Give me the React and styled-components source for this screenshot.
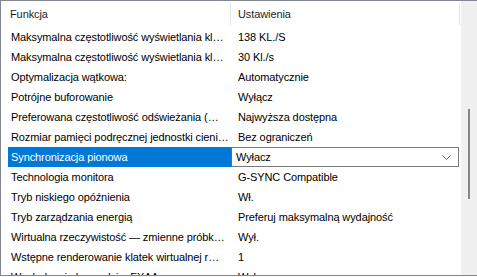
import styled, { createGlobalStyle } from 'styled-components';

const GlobalStyle = createGlobalStyle`
  html, body {
    margin: 0;
    padding: 0;
    background: #ffffff;
    overflow: hidden;
  }
`;

const rows = [
  { name: 'Maksymalna częstotliwość wyświetlania kl…', value: '138 KL./S' },
  { name: 'Maksymalna częstotliwość wyświetlania kl…', value: '30 Kl./s' },
  { name: 'Optymalizacja wątkowa:', value: 'Automatycznie' },
  { name: 'Potrójne buforowanie', value: 'Wyłącz' },
  { name: 'Preferowana częstotliwość odświeżania (…', value: 'Najwyższa dostępna' },
  { name: 'Rozmiar pamięci podręcznej jednostki cieni…', value: 'Bez ograniczeń' },
  { name: 'Synchronizacja pionowa', value: 'Wyłacz', selected: true },
  { name: 'Technologia monitora', value: 'G-SYNC Compatible' },
  { name: 'Tryb niskiego opóźnienia', value: 'Wł.' },
  { name: 'Tryb zarządzania energią', value: 'Preferuj maksymalną wydajność' },
  { name: 'Wirtualna rzeczywistość — zmienne próbk…', value: 'Wył.' },
  { name: 'Wstępne renderowanie klatek wirtualnej r…', value: '1' },
  { name: 'Wygładzanie krawędzi – FXAA', value: 'Wył.' },
];

const Chevron = () => (
  <svg width="9" height="5" viewBox="0 0 9 5">
    <path d="M0.5 0.5 L4.5 4.5 L8.5 0.5" fill="none" stroke="#606060" strokeWidth="1" />
  </svg>
);

const App = () => (
  <>
    <GlobalStyle />
    <StyledPanel>
      <StyledList>
        <StyledHeader>
          <StyledHeadCell $width="230px" $pad="9px">Funkcja</StyledHeadCell>
          <StyledHeadCell $width="229px" $pad="7px">Ustawienia</StyledHeadCell>
        </StyledHeader>
        {rows.map((row, i) => (
          <StyledRow key={i}>
            <StyledName $selected={row.selected}>{row.name}</StyledName>
            {row.selected ? (
              <StyledSelect>
                <span>{row.value}</span>
                <Chevron />
              </StyledSelect>
            ) : (
              <StyledValue>{row.value}</StyledValue>
            )}
          </StyledRow>
        ))}
      </StyledList>
      <StyledScrollbar>
        <StyledThumb />
      </StyledScrollbar>
    </StyledPanel>
  </>
);

const StyledPanel = styled.div`
  display: flex;
  box-sizing: border-box;
  width: 478px;
  height: 276px;
  border: 1px solid #828790;
  overflow: hidden;
  background: #ffffff;

  font-family: 'Liberation Sans', Arial, sans-serif;
  font-size: 11px;
  letter-spacing: -0.1px;
  color: #000000;
`;

const StyledList = styled.div`
  width: 460px;
  flex-shrink: 0;
  overflow: hidden;
`;

const StyledHeader = styled.div`
  display: flex;
  height: 26px;
  align-items: center;
`;

const StyledHeadCell = styled.div`
  box-sizing: border-box;
  width: ${({ $width }) => $width};
  height: 22px;
  line-height: 22px;
  padding-left: ${({ $pad }) => $pad};
  border-right: 1px solid #e5e5e5;
  color: #1e1e1e;
`;

const StyledRow = styled.div`
  display: grid;
  grid-template-columns: 230px 230px;
  height: 20px;
  line-height: 20px;
`;

const StyledName = styled.div`
  margin-left: 7px;
  padding-left: 3px;
  white-space: nowrap;
  overflow: hidden;
  text-overflow: ellipsis;
  background: ${({ $selected }) => ($selected ? '#0078d7' : 'transparent')};
  color: ${({ $selected }) => ($selected ? '#ffffff' : '#000000')};
`;

const StyledValue = styled.div`
  padding-left: 7px;
  white-space: nowrap;
  overflow: hidden;
`;

const StyledSelect = styled.div`
  display: flex;
  align-items: center;
  justify-content: space-between;
  box-sizing: border-box;
  width: 228px;
  height: 20px;
  padding: 0 7px 0 4px;
  border: 1px solid #7a7a7a;
  border-left-color: #2f78c4;
  line-height: 18px;
`;

const StyledScrollbar = styled.div`
  position: relative;
  width: 16px;
  flex-shrink: 0;
  background: #f0f0f0;
`;

const StyledThumb = styled.div`
  position: absolute;
  left: 7px;
  top: 108px;
  width: 2px;
  height: 90px;
  background: #868686;
`;

export default App;
